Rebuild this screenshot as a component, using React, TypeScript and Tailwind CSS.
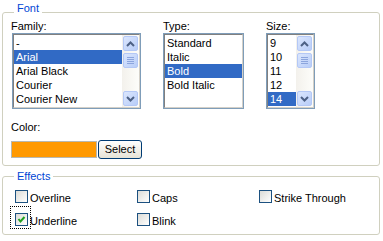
import type { ReactNode } from 'react';

// ============================================
// XP風 フォント設定パネル
// ============================================

const families = ['-', 'Arial', 'Arial Black', 'Courier', 'Courier New'];
const types = ['Standard', 'Italic', 'Bold', 'Bold Italic'];
const sizes = ['9', '10', '11', '12', '14'];

const Arrow = ({ dir }: { dir: 'up' | 'down' }) => (
  <svg width="9" height="6" viewBox="0 0 9 6">
    <polyline
      points={dir === 'up' ? '1,5 4.5,1.5 8,5' : '1,1 4.5,4.5 8,1'}
      fill="none"
      stroke="#4d6185"
      strokeWidth="2"
    />
  </svg>
);

const ScrollButton = ({ children }: { children: ReactNode }) => (
  <div className="h-[17px] p-[1px]">
    <div className="h-full rounded-[2px] border border-[#b4c8f6] bg-gradient-to-br from-[#dbe6fd] to-[#b8cdf8] flex items-center justify-center">
      {children}
    </div>
  </div>
);

const ScrollBar = () => (
  <div className="w-[17px] flex flex-col bg-gradient-to-r from-[#f3f1ec] to-[#fdfdfa]">
    <ScrollButton><Arrow dir="up" /></ScrollButton>
    <ScrollButton>
      <div className="flex flex-col gap-[1px]">
        {[0, 1, 2, 3].map(i => (
          <span key={i} className="block w-[7px] h-[1px] bg-[#8ca5dd]" />
        ))}
      </div>
    </ScrollButton>
    <div className="flex-1" />
    <ScrollButton><Arrow dir="down" /></ScrollButton>
  </div>
);

interface ListBoxProps {
  items: string[];
  selected: string;
  width: string;
  scroll?: boolean;
}

const ListBox = ({ items, selected, width, scroll }: ListBoxProps) => (
  <div className={`${width} h-[76px] border border-[#7f9db9]`}>
    <div className="h-full flex border border-t-[#808080] border-l-[#808080] border-b-[#d4d0c8] border-r-[#d4d0c8] bg-white">
      <div className="flex-1 py-[1px] overflow-hidden">
        {items.map(item => (
          <div
            key={item}
            className={`h-[14px] leading-[14px] pl-[2px] whitespace-nowrap ${
              item === selected ? 'bg-[#316ac5] text-white' : 'text-black'
            }`}
          >
            {item}
          </div>
        ))}
      </div>
      {scroll && <ScrollBar />}
    </div>
  </div>
);

const CheckBox = ({ label, checked, focused }: { label: string; checked?: boolean; focused?: boolean }) => (
  <div className="flex items-start h-[23px]">
    <span
      className={`block pl-[4px] pr-[2px] pt-[6px] pb-[2px] border ${
        focused ? 'border-dotted border-black' : 'border-transparent'
      }`}
    >
      <span className="block w-[13px] h-[13px] border border-[#1c5180] bg-gradient-to-br from-[#dcdcd7] to-white">
        {checked && (
          <svg width="11" height="11" viewBox="0 0 11 11">
            <polyline points="2.5,5 4.5,7.5 8.5,3" fill="none" stroke="#21a121" strokeWidth="2" />
          </svg>
        )}
      </span>
    </span>
    <span className="-ml-[1px] pt-[9px] leading-[13px]">{label}</span>
  </div>
);

export default function App() {
  return (
    <div className="w-[383px] h-[241px] bg-white pl-[2px] text-[11px] text-black font-['Liberation_Sans',Arial,sans-serif]">
      {/* Font */}
      <fieldset className="mt-[2px] w-[378px] border border-[#d0d0bf] rounded-[3px] pl-[8px] pb-[6px]">
        <legend className="ml-[3px] px-[3px] pb-[8px] leading-[13px] text-[#0046d5]">Font</legend>

        <div className="-mt-[3px] flex gap-[22px]">
          <div className="w-[130px]">
            <div className="leading-[13px]">Family:</div>
            <div className="ml-[1px]">
              <ListBox items={families} selected="Arial" width="w-[129px]" scroll />
            </div>
          </div>
          <div className="w-[81px]">
            <div className="leading-[13px]">Type:</div>
            <ListBox items={types} selected="Bold" width="w-[81px]" />
          </div>
          <div className="w-[49px]">
            <div className="leading-[13px]">Size:</div>
            <ListBox items={sizes} selected="14" width="w-[49px]" scroll />
          </div>
        </div>

        <div className="mt-[12px] leading-[13px]">Color:</div>
        <div className="mt-[6px] flex items-center">
          <div className="w-[86px] h-[17px] bg-[#ff9900] border border-[#b8b8b0]" />
          <button className="ml-[1px] w-[44px] h-[19px] rounded-[3px] border border-[#003c74] bg-gradient-to-b from-white to-[#e6e3d6] leading-[17px] text-black">
            Select
          </button>
        </div>
      </fieldset>

      {/* Effects */}
      <fieldset className="mt-[4px] w-[378px] border border-[#d0d0bf] rounded-[3px] pl-[7px] pb-[5px]">
        <legend className="ml-[4px] px-[3px] leading-[13px] text-[#0046d5]">Effects</legend>
        <div className="grid grid-cols-[122px_122px_122px]">
          <CheckBox label="Overline" />
          <CheckBox label="Caps" />
          <CheckBox label="Strike Through" />
          <CheckBox label="Underline" checked focused />
          <CheckBox label="Blink" />
        </div>
      </fieldset>
    </div>
  );
}
